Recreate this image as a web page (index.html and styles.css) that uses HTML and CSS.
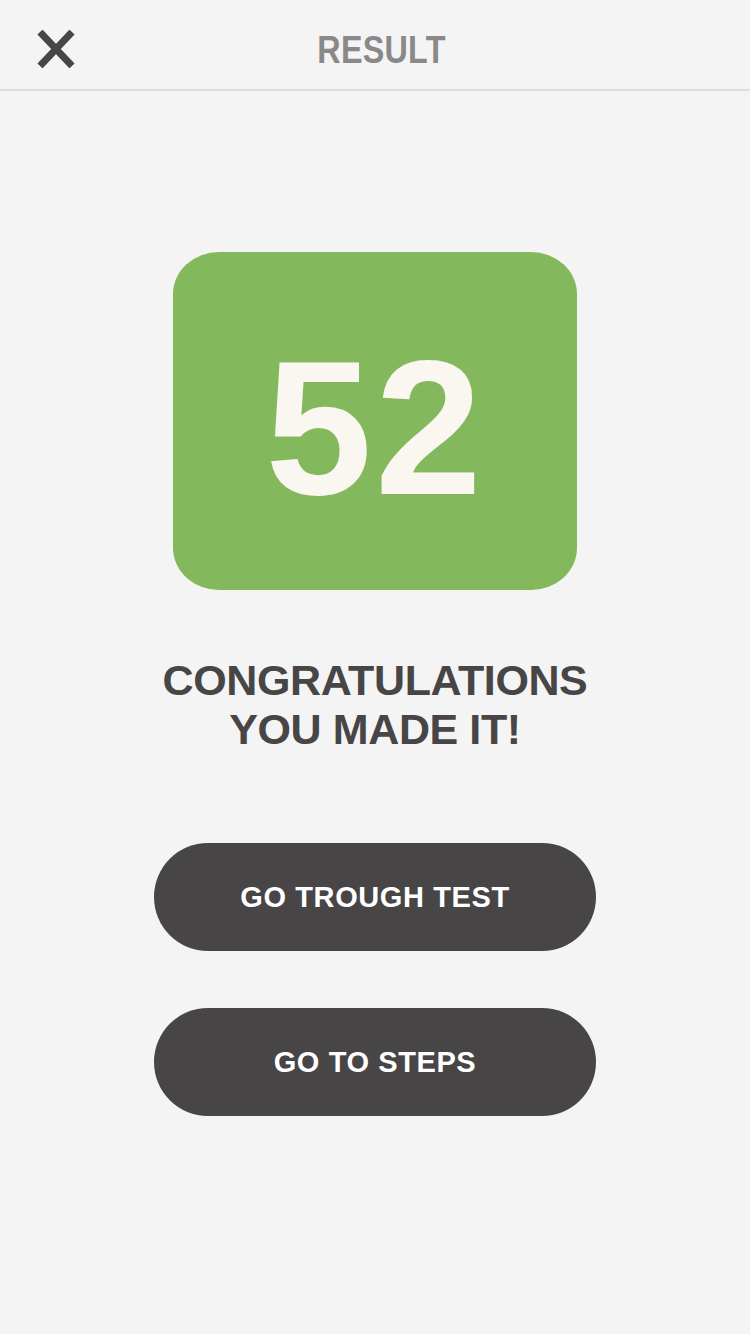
FILE: index.html
```html
<!DOCTYPE html>
<html>
<head>
<meta charset="utf-8">
<link rel="stylesheet" href="styles.css">
</head>
<body>
<div class="app">
  <header class="topbar">
    <button class="close" aria-label="Close">
      <svg width="38" height="38" viewBox="0 0 38 38"><path d="M3 2 L35 36 M35 2 L3 36" stroke="#474545" stroke-width="7" stroke-linecap="butt"/></svg>
    </button>
    <h1 class="title">RESULT</h1>
  </header>
  <main class="content">
    <div class="score"><span class="score-num">52</span></div>
    <p class="message">CONGRATULATIONS<br>YOU MADE IT!</p>
    <div class="actions">
      <button class="btn">GO TROUGH TEST</button>
      <button class="btn">GO TO STEPS</button>
    </div>
  </main>
</div>
</body>
</html>
```
FILE: styles.css
```css
html, body {
  margin: 0;
  padding: 0;
  background: #f4f4f4;
}
body {
  font-family: "Liberation Sans", Arial, sans-serif;
  width: 750px;
  height: 1334px;
  overflow: hidden;
}
.app {
  display: flex;
  flex-direction: column;
}
.topbar {
  position: relative;
  height: 89px;
  border-bottom: 2px solid #dddddd;
  display: flex;
  align-items: center;
  justify-content: center;
}
.close {
  position: absolute;
  left: 37px;
  top: 30px;
  width: 38px;
  height: 38px;
  padding: 0;
  border: 0;
  background: none;
  display: flex;
}
.title {
  margin: 10px 0 0 13px;
  font-weight: 700;
  font-size: 38px;
  color: #8a8888;
  letter-spacing: 0.3px;
  line-height: 1;
  transform: scaleX(0.85);
}
.content {
  display: flex;
  flex-direction: column;
  align-items: center;
  padding-top: 161px;
}
.score {
  width: 404px;
  height: 338px;
  background: #84b85c;
  border-radius: 46px / 42px;
  display: flex;
  align-items: center;
  justify-content: center;
}
.score-num {
  font-size: 192px;
  font-weight: 700;
  color: #faf6f0;
  line-height: 1;
  letter-spacing: 3px;
  margin-top: 14px;
  margin-left: 0;
}
.message {
  margin: 66px 0 0;
  text-align: center;
  font-size: 43px;
  font-weight: 700;
  line-height: 49px;
  color: #474545;
  letter-spacing: -0.4px;
}
.actions {
  margin-top: 89px;
  display: flex;
  flex-direction: column;
  gap: 57px;
}
.btn {
  width: 442px;
  height: 108px;
  border: 0;
  border-radius: 54px;
  background: #474545;
  color: #ffffff;
  font-family: "Liberation Sans", Arial, sans-serif;
  font-weight: 700;
  font-size: 29px;
  letter-spacing: 0.6px;
  padding: 0;
}
```
